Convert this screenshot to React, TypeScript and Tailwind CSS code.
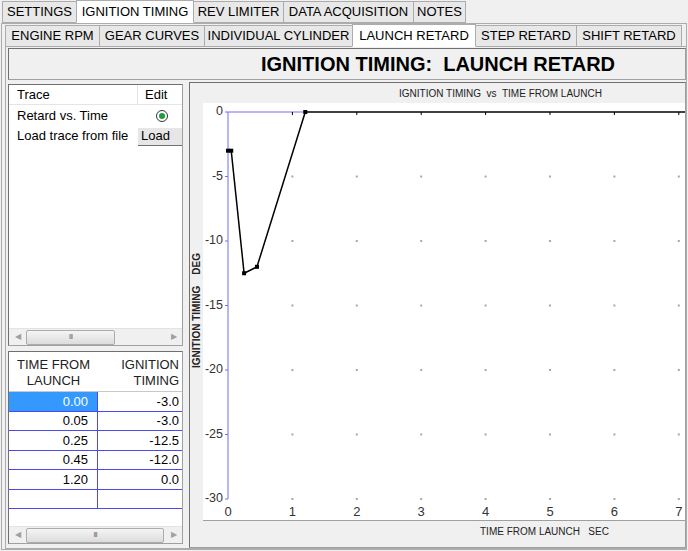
import { ReactNode } from 'react'

const topTabs = [
  { label: 'SETTINGS', w: 'w-[75px]' },
  { label: 'IGNITION TIMING', w: 'w-[118px]', active: true },
  { label: 'REV LIMITER', w: 'w-[91px]' },
  { label: 'DATA ACQUISITION', w: 'w-[131px]' },
  { label: 'NOTES', w: 'w-[53px]' },
]

const subTabs = [
  { label: 'ENGINE RPM', w: 'w-[95px]' },
  { label: 'GEAR CURVES', w: 'w-[106px]' },
  { label: 'INDIVIDUAL CYLINDER', w: 'w-[149px]' },
  { label: 'LAUNCH RETARD', w: 'w-[124px]', active: true },
  { label: 'STEP RETARD', w: 'w-[102px]' },
  { label: 'SHIFT RETARD', w: 'w-[106px]' },
]

const rows = [
  ['0.00', '-3.0'],
  ['0.05', '-3.0'],
  ['0.25', '-12.5'],
  ['0.45', '-12.0'],
  ['1.20', '0.0'],
  ['', ''],
]

const points: [number, number][] = [
  [0, -3],
  [0.05, -3],
  [0.25, -12.5],
  [0.45, -12],
  [1.2, 0],
]

function Tab({ label, w, active }: { label: string; w: string; active?: boolean }) {
  return (
    <div
      className={`${w} flex items-center justify-center border border-[#acacac] -ml-px first:ml-0 whitespace-nowrap ${
        active ? 'bg-white h-[23px] border-b-white relative z-10' : 'bg-[#e8e8e8] h-[22px] mt-[1px]'
      }`}
    >
      {label}
    </div>
  )
}

function Scrollbar({ thumb }: { thumb: string }) {
  return (
    <div className="h-[17px] flex items-center bg-[#f0f0f0] border-t border-[#e3e3e3] text-[#a0a0a0]">
      <div className="w-[17px] flex justify-center text-[8px]">◀</div>
      <div className="flex-1 h-[15px] relative">
        <div
          className={`${thumb} h-[15px] rounded-[2px] border border-[#acacac] bg-gradient-to-b from-[#f5f5f5] to-[#dcdcdc] flex items-center justify-center text-[8px] text-[#777] tracking-[-1px]`}
        >
          III
        </div>
      </div>
      <div className="w-[17px] flex justify-center text-[8px]">▶</div>
    </div>
  )
}

function Listbox() {
  return (
    <div className="h-[262px] flex flex-col bg-white border border-[#a0a0a0] border-t-[#707070] border-l-[#707070]">
      <div className="flex h-[20px] border-b border-[#e5e5e5]">
        <div className="w-[129px] pl-[8px] border-r border-[#e5e5e5] flex items-center">Trace</div>
        <div className="flex-1 pl-[7px] flex items-center">Edit</div>
      </div>
      <div className="flex h-[21px] items-center">
        <div className="w-[129px] pl-[8px]">Retard vs. Time</div>
        <div className="flex-1 flex justify-center pl-[3px]">
          <div className="w-[12px] h-[12px] rounded-full border border-[#333] flex items-center justify-center">
            <div className="w-[6px] h-[6px] rounded-full bg-[#1e9b3c]" />
          </div>
        </div>
      </div>
      <div className="flex h-[19px] items-center">
        <div className="w-[129px] pl-[8px]">Load trace from file</div>
        <div className="flex-1 h-[18px] bg-[#e6e6e6] border-b border-[#707070] pl-[3px] flex items-center mt-[2px]">Load</div>
      </div>
      <div className="flex-1" />
      <Scrollbar thumb="w-[89px]" />
    </div>
  )
}

function DataTable() {
  return (
    <div className="h-[193px] flex flex-col bg-white border border-[#a0a0a0] border-t-[#707070] border-l-[#707070]">
      <div className="flex h-[40px] shrink-0 border-b border-[#c8c8c8] text-[#222] leading-[16px] pt-[2px]">
        <div className="w-[89px] flex flex-col items-center justify-center text-center">
          <span>TIME FROM</span>
          <span>LAUNCH</span>
        </div>
        <div className="flex-1 flex flex-col items-end justify-center pr-[3px]">
          <span>IGNITION</span>
          <span>TIMING</span>
        </div>
      </div>
      {rows.map(([t, v], i) => (
        <div key={i} className="flex h-[19.5px] shrink-0 border-b border-[#4a4af0]">
          <div
            className={`w-[89px] border-r border-[#4a4af0] flex items-center justify-end pr-[9px] ${
              i === 0 ? 'bg-[#3399ff] text-white' : ''
            }`}
          >
            {t}
          </div>
          <div className="flex-1 flex items-center justify-end pr-[3px]">{v}</div>
        </div>
      ))}
      <div className="flex-1" />
      <Scrollbar thumb="w-[138px]" />
    </div>
  )
}

const px = (t: number) => 25 + t * 64.4
const py = (d: number) => 9 - d * 12.9

function Plot() {
  const xs = [0, 1, 2, 3, 4, 5, 6, 7]
  const ys = [0, -5, -10, -15, -20, -25, -30]
  const dots: ReactNode[] = []
  xs.slice(1).forEach((x) =>
    ys.forEach((y) => {
      if (y === 0) {
        dots.push(<line key={`t${x}`} x1={px(x)} y1={py(0)} x2={px(x)} y2={py(0) + 3} stroke="#000" strokeWidth={1} />)
      } else {
        dots.push(<rect key={`${x}_${y}`} x={px(x) - 1} y={py(y) - 1} width={2} height={2} fill="#a8a8a8" />)
      }
    })
  )
  const line = points.map(([t, d]) => `${px(t)},${py(d)}`).join(' ')
  return (
    <svg width={485} height={417} className="block">
      <rect x={0} y={0} width={485} height={417} fill="#fff" />
      <line x1={px(0)} y1={py(0)} x2={px(0)} y2={py(-30)} stroke="#7070f0" strokeWidth={1} />
      <line x1={px(0)} y1={py(0)} x2={px(1.2)} y2={py(0)} stroke="#7070f0" strokeWidth={1} />
      {ys.map((y) => (
        <g key={y}>
          <line x1={px(0) - 3} y1={py(y)} x2={px(0)} y2={py(y)} stroke="#7070f0" strokeWidth={1} />
          <text
            x={20}
            y={py(y)}
            textAnchor="end"
            dominantBaseline="middle"
            fontSize={12.5}
            fill="#333"
            fontFamily="'Liberation Sans', sans-serif"
          >
            {y}
          </text>
        </g>
      ))}
      {xs.map((x) => (
        <text
          key={x}
          x={px(x)}
          y={410}
          textAnchor="middle"
          dominantBaseline="middle"
          fontSize={13}
          fill="#333"
          fontFamily="'Liberation Sans', sans-serif"
        >
          {x}
        </text>
      ))}
      {dots}
      <line x1={px(1.2)} y1={py(0)} x2={485} y2={py(0)} stroke="#000" strokeWidth={1.5} />
      <polyline points={line} fill="none" stroke="#000" strokeWidth={1.5} />
      {points.map(([t, d], i) => (
        <rect key={i} x={px(t) - 2} y={py(d) - 2} width={4} height={4} fill="#000" />
      ))}
    </svg>
  )
}

function Chart() {
  return (
    <div className="flex-1 h-[466px] flex flex-col border border-[#a0a0a0] border-t-[#707070] border-l-[#707070] overflow-hidden">
      <div className="h-[20px] shrink-0 flex items-center pl-[209px] text-[10px] text-[#222] whitespace-pre">
        IGNITION TIMING  vs  TIME FROM LAUNCH
      </div>
      <div className="flex">
        <div className="w-[13px] h-[417px] flex items-center justify-center pb-[2px]">
          <div className="[writing-mode:vertical-rl] rotate-180 text-[10px] font-bold text-[#222] whitespace-pre">
            IGNITION TIMING    DEG
          </div>
        </div>
        <div className="border-b border-[#a0a0a0]">
          <Plot />
        </div>
      </div>
      <div className="h-[20px] shrink-0 flex items-center pl-[290px] text-[10px] text-[#222] whitespace-pre">
        TIME FROM LAUNCH   SEC
      </div>
    </div>
  )
}

export default function App() {
  return (
    <div className="w-[688px] h-[551px] bg-[#f0f0f0] overflow-hidden text-[13px] text-black font-['Liberation_Sans',Arial,sans-serif]">
      <div className="flex pl-[2px] h-[24px]">
        {topTabs.map((t) => (
          <Tab key={t.label} {...t} />
        ))}
      </div>
      <div className="h-[527px] -mt-px mx-[1px] border border-[#acacac] bg-[#f0f0f0] flex flex-col">
        <div className="flex pl-[3px] h-[23px]">
          {subTabs.map((t) => (
            <Tab key={t.label} {...t} />
          ))}
        </div>
        <div className="flex-1 -mt-px ml-[3px] border border-[#acacac] border-r-0 flex flex-col pl-[2px] pt-[1px]">
          <div className="h-[32px] shrink-0 border border-[#a0a0a0] border-t-[#707070] border-l-[#707070] flex items-center pl-[252px]">
            <span className="text-[20px] font-bold whitespace-pre">IGNITION TIMING:  LAUNCH RETARD</span>
          </div>
          <div className="flex gap-[6px] mt-[2px]">
            <div className="w-[175px] flex flex-col gap-[5px] pt-[2px]">
              <Listbox />
              <DataTable />
            </div>
            <Chart />
          </div>
        </div>
      </div>
    </div>
  )
}
